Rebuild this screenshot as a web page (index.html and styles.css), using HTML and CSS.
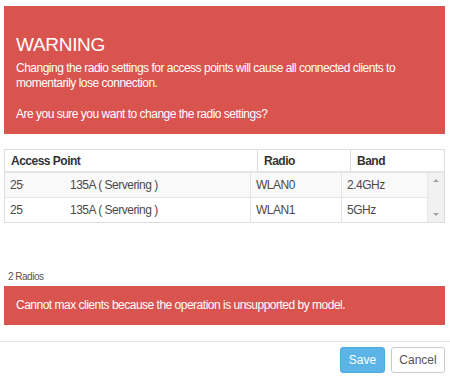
FILE: index.html
```html
<!DOCTYPE html>
<html lang="en">
<head>
    <meta charset="UTF-8">
    <title>Radio Settings</title>
    <link rel="stylesheet" href="styles.css">
</head>
<body>
    <div class="modal">
        <div class="modal-body">
            <div class="alert alert-warning">
                <h3>WARNING</h3>
                <p>Changing the radio settings for access points will cause all connected clients to momentarily lose connection.</p>
                <p class="question">Are you sure you want to change the radio settings?</p>
            </div>

            <div class="grid-table">
                <div class="grid-head">
                    <div class="cell">Access Point</div>
                    <div class="cell">Radio</div>
                    <div class="cell">Band</div>
                </div>
                <div class="grid-scroll">
                    <div class="grid-body">
                        <div class="row odd">
                            <div class="cell"><span class="ap-id">25<span class="cut">'</span></span>135A ( Servering )</div>
                            <div class="cell">WLAN0</div>
                            <div class="cell">2.4GHz</div>
                        </div>
                        <div class="row">
                            <div class="cell"><span class="ap-id">25</span>135A ( Servering )</div>
                            <div class="cell">WLAN1</div>
                            <div class="cell">5GHz</div>
                        </div>
                    </div>
                    <div class="scrollbar">
                        <span class="arrow up"></span>
                        <span class="arrow down"></span>
                    </div>
                </div>
            </div>

            <div class="grid-footer">2 Radios</div>

            <div class="alert alert-error">
                Cannot max clients because the operation is unsupported by model.
            </div>
        </div>
        <div class="modal-footer">
            <button class="btn btn-primary" disabled>Save</button>
            <button class="btn btn-default">Cancel</button>
        </div>
    </div>
</body>
</html>
```

FILE: styles.css
```css
body {
    margin: 0;
    background: #fff;
    font-family: "Liberation Sans", Arial, sans-serif;
    color: #333;
    letter-spacing: -0.5px;
}
.modal {
    width: 450px;
}
.modal-body {
    padding: 6px 5px 0 4px;
}
.alert {
    background-color: #d9534f;
    color: #fff;
    font-size: 12px;
}
.alert-warning {
    padding: 28px 12px 12px 12px;
}
.alert-warning h3 {
    margin: 0 0 5px;
    font-size: 19px;
    font-weight: normal;
    line-height: 22px;
    letter-spacing: -0.3px;
}
.alert-warning p {
    margin: 0;
    line-height: 15px;
}
.alert-warning .question {
    margin-top: 16px;
}
.grid-table {
    margin-top: 15px;
    border: 1px solid #ddd;
    font-size: 12px;
}
.grid-head {
    display: grid;
    grid-template-columns: 252px 93px 1fr;
    height: 21px;
    border-bottom: 2px solid #e4e4e4;
    font-weight: bold;
}
.grid-head .cell {
    padding: 0 6px;
    line-height: 22px;
    border-left: 1px solid #ddd;
}
.grid-head .cell:first-child {
    border-left: none;
}
.grid-scroll {
    display: flex;
}
.grid-body {
    flex: 1;
}
.row {
    display: grid;
    grid-template-columns: 245px 91px 1fr;
    height: 24px;
    border-bottom: 1px solid #e6e6e6;
    color: #4a4a4a;
}
.row:last-child {
    border-bottom: none;
}
.row.odd {
    background-color: #f9f9f9;
}
.row .cell {
    padding: 0 5px;
    line-height: 25px;
    border-left: 1px solid #e4e4e4;
}
.row .cell:first-child {
    border-left: none;
}
.ap-id {
    display: inline-block;
    width: 60px;
}
.cut {
    font-size: 8px;
}
.scrollbar {
    width: 16px;
    background-color: #f1f1f1;
    border-left: 1px solid #e8e8e8;
    display: flex;
    flex-direction: column;
    justify-content: space-between;
    align-items: center;
    padding: 6px 0;
}
.arrow {
    width: 0;
    height: 0;
    border-left: 3px solid transparent;
    border-right: 3px solid transparent;
}
.arrow.up {
    border-bottom: 3px solid #a3a3a3;
}
.arrow.down {
    border-top: 3px solid #a3a3a3;
}
.grid-footer {
    margin-top: 48px;
    padding-left: 4px;
    font-size: 10px;
    color: #555;
    height: 12px;
    line-height: 12px;
}
.alert-error {
    margin-top: 3px;
    padding: 0 12px;
    height: 39px;
    line-height: 39px;
}
.modal-footer {
    margin-top: 16px;
    border-top: 1px solid #e5e5e5;
    padding: 5px 5px 6px 0;
    display: flex;
    justify-content: flex-end;
    gap: 6px;
}
.btn {
    font-family: "Liberation Sans", Arial, sans-serif;
    font-size: 12px;
    height: 26px;
    padding: 0;
    border-radius: 3px;
    border: 1px solid #ccc;
    background: #fff;
    color: #555;
}
.btn-primary {
    background-color: #5bb4e5;
    border-color: #4ea9dc;
    color: #fff;
    width: 45px;
}
.btn-default {
    width: 54px;
}
```
